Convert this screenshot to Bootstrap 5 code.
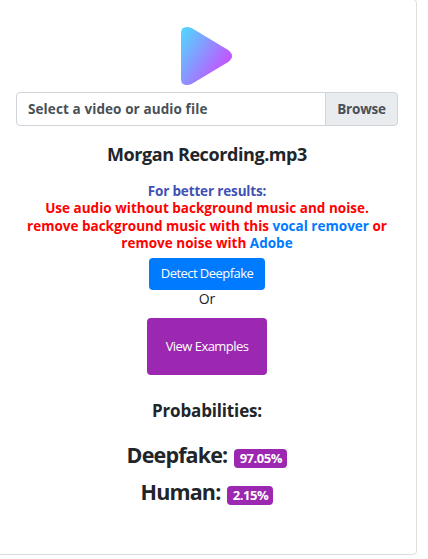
<!DOCTYPE html>
<html lang="en">
<head>
<meta charset="utf-8">
<meta name="viewport" content="width=device-width, initial-scale=1">
<title>Deepfake detector</title>
<link href="https://cdn.jsdelivr.net/npm/bootstrap@5.3.0/dist/css/bootstrap.min.css" rel="stylesheet">
<style>
body{font-family:"Open Sans","Noto Sans",sans-serif;color:#212529;background:#fff;overflow:hidden}
.detector{width:420px;height:556px;margin:-1px 0 0 -3px;border:1px solid #dfdfdf;border-radius:4px;padding:26px 18px 0}
.logo{height:66px}
.picker{height:34px}
.picker .form-control,.picker .input-group-text{font-size:13.5px;font-weight:700;line-height:20px;color:#495057;border-color:#ced4da;border-radius:4px;padding:6px 11px}
.picker .input-group-text{background:#e9ecef;width:73px;letter-spacing:-.2px}
.picker .form-control{letter-spacing:.1px}
.filename{font-size:18px;line-height:26px;font-weight:700;letter-spacing:-.42px;margin:15px 0 16px}
.tips{font-size:13.5px;line-height:17.4px;font-weight:700;letter-spacing:.01px;color:#f00;height:75px}
.tips b{color:#3f51b5;font-weight:700;letter-spacing:-.15px}
.tips a{color:#007bff;text-decoration:none}
.btn{font-size:13px;letter-spacing:-.55px;border:0;border-radius:4px;color:#fff;padding:0}
.detect{background:#007bff;width:116px;height:32px}
.examples{background:#9c27b0;width:120px;height:57px}
.or{font-size:14px;line-height:18px;height:28px}
.prob{font-size:17px;line-height:26px;font-weight:700;letter-spacing:-.15px;margin:23px 0 12px}
.score{font-size:21.5px;line-height:37px;height:37px;font-weight:700;letter-spacing:-.85px}
.score .badge{background:#9c27b0;font-size:13px;font-weight:700;letter-spacing:-.45px;line-height:19px;height:19px;padding:0;border-radius:4px;margin:7px 0 0 7px}
.w1{width:53px}.w2{width:46px}
</style>
</head>
<body>
<main class="card detector text-center">
  <div class="logo">
    <svg width="52" height="60" viewBox="0 0 54 60" preserveAspectRatio="none" class="d-block mx-auto">
      <defs><linearGradient id="g" gradientUnits="userSpaceOnUse" x1="2" y1="8" x2="48" y2="38"><stop offset="0" stop-color="#56d0ff"/><stop offset="1" stop-color="#c355ff"/></linearGradient></defs>
      <path fill="url(#g)" d="M0 7Q0 1 6 1Q9 1 11 2L49 24Q53 27 53 30Q53 33 49 36L11 58Q9 59 6 59Q0 59 0 53Z"/>
    </svg>
  </div>
  <div class="input-group picker flex-nowrap">
    <div class="form-control text-start text-nowrap">Select a video or audio file</div>
    <div class="input-group-text justify-content-center">Browse</div>
  </div>
  <h5 class="filename">Morgan Recording.mp3</h5>
  <div class="tips text-nowrap">
    <b>For better results:</b><br>
    Use audio without background music and noise.<br>
    remove background music with this <a href="#">vocal remover</a> or<br>
    remove noise with <a href="#">Adobe</a>
  </div>
  <div class="d-flex flex-column align-items-center">
    <button type="button" class="btn detect">Detect Deepfake</button>
    <div class="or">Or</div>
    <button type="button" class="btn examples">View Examples</button>
  </div>
  <h6 class="prob">Probabilities:</h6>
  <div class="score d-flex justify-content-center align-items-center"><span>Deepfake:</span><span class="badge w1">97.05%</span></div>
  <div class="score d-flex justify-content-center align-items-center"><span>Human:</span><span class="badge w2">2.15%</span></div>
</main>
<script src="https://cdn.jsdelivr.net/npm/bootstrap@5.3.0/dist/js/bootstrap.bundle.min.js"></script>
</body>
</html>
